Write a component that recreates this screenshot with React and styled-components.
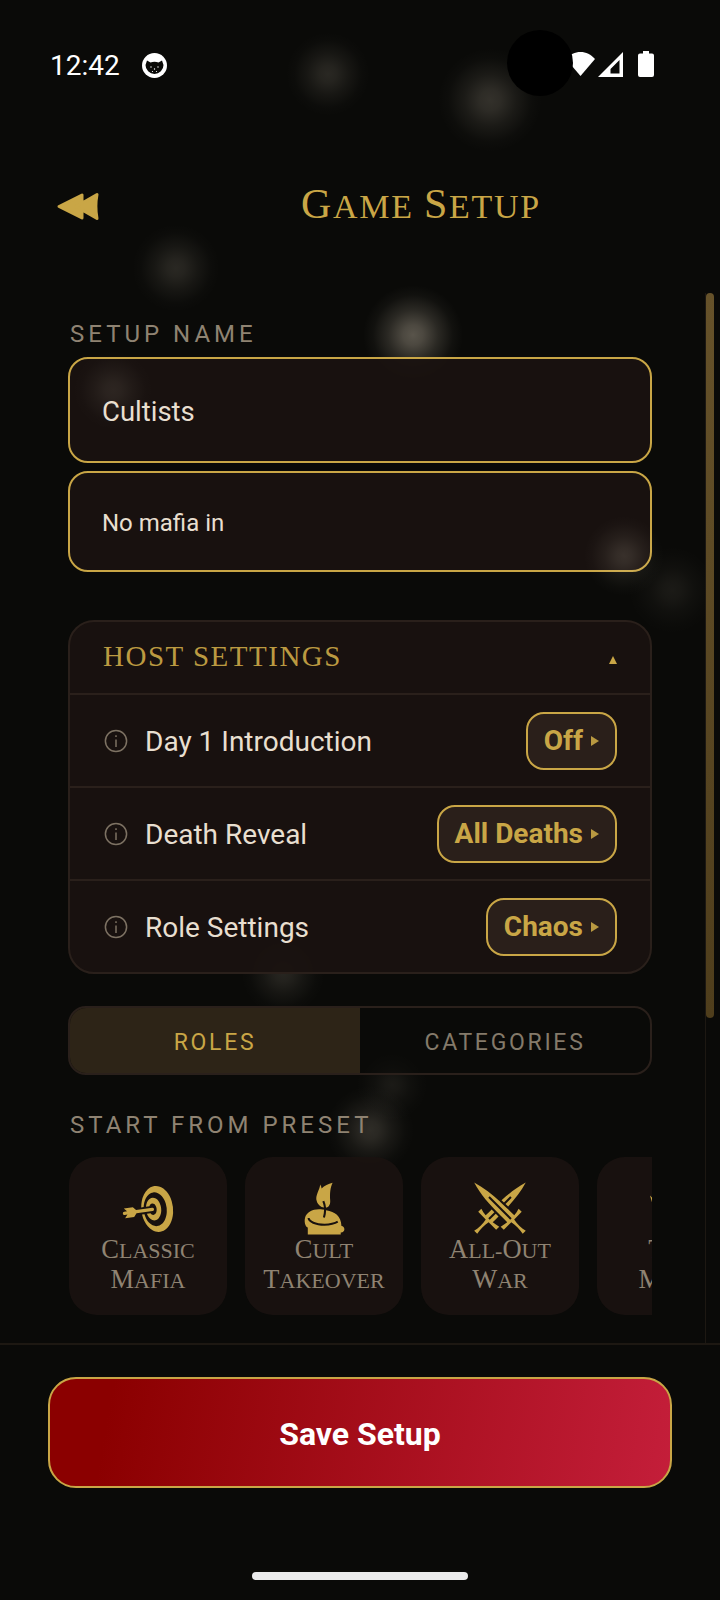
import styled, { createGlobalStyle } from "styled-components";
import { GiBullseye, GiCandleFlame, GiCrossedSwords, GiCrown } from "react-icons/gi";

const gold = "#c9a646";
const line = "#2a201b";
const panel = "rgba(26, 18, 16, 0.94)";
const display = `"Liberation Serif", serif`;
const ui = `Roboto, "Liberation Sans", sans-serif`;

const GlobalStyle = createGlobalStyle`
  html, body {
    margin: 0;
    background: #0a0a08;
  }
  * {
    box-sizing: border-box;
  }
`;

const spot = (x, y, r, a) =>
  `radial-gradient(circle ${r}px at ${x}px ${y}px, rgba(255, 240, 215, ${a}), rgba(255, 240, 215, ${a * 0.85}) 20%, rgba(255, 240, 215, ${a * 0.42}) 50%, rgba(255, 240, 215, ${a * 0.1}) 80%, transparent)`;

const Page = styled.div`
  position: relative;
  width: 720px;
  height: 1600px;
  display: flex;
  flex-direction: column;
  overflow: hidden;
  font-family: ${ui};
  background-color: #0a0a08;
  background-image: ${[
    spot(328, 74, 42, 0.13),
    spot(490, 100, 52, 0.17),
    spot(176, 268, 44, 0.13),
    spot(413, 335, 50, 0.32),
    spot(672, 590, 44, 0.07),
    spot(283, 973, 42, 0.12),
    spot(392, 1085, 36, 0.07),
    spot(370, 1130, 44, 0.15),
  ].join(", ")};
`;

const FrontSpecks = styled.div`
  position: absolute;
  inset: 0;
  pointer-events: none;
  background-image: ${[spot(113, 390, 40, 0.09), spot(624, 556, 40, 0.14)].join(", ")};
`;

const StatusBar = styled.div`
  height: 165px;
  display: flex;
  align-items: flex-start;
  padding: 48px 66px 0 50px;
  color: #fff;
`;

const Clock = styled.span`
  font-size: 28px;
  line-height: 36px;
  width: 92px;
`;

const CatBadge = styled.svg`
  margin-top: 5px;
  width: 25px;
  height: 25px;
`;

const StatusIcons = styled.div`
  margin-left: auto;
  display: flex;
  align-items: flex-start;
  gap: 3px;
  padding-top: 3px;
`;

const BatteryIcon = styled.svg`
  margin-left: 11px;
`;

const Camera = styled.div`
  position: absolute;
  left: 507px;
  top: 30px;
  width: 66px;
  height: 66px;
  border-radius: 50%;
  background: #000;
`;

const Header = styled.header`
  height: 80px;
  display: flex;
  align-items: flex-start;
  gap: 201px;
  padding: 25px 0 0 56px;
`;

const BackIcon = styled.svg`
  width: 44px;
  height: 30px;
  flex: none;
  margin-top: 2px;
`;

const Title = styled.h1`
  margin: -10px 0 0;
  font: 400 34px/48px ${display};
  text-transform: uppercase;
  color: ${gold};
  letter-spacing: 1.7px;
`;

const Cap = styled.span`
  font-size: ${(p) => p.$size}px;
`;

const Scroll = styled.main`
  position: relative;
  flex: 1;
  min-height: 0;
  padding: 76px 68px 0;
  display: flex;
  flex-direction: column;
`;

const Rail = styled.div`
  position: absolute;
  top: 48px;
  bottom: 0;
  left: 705px;
  width: 10px;
  border-left: 1px solid #1d1812;
`;

const Thumb = styled.div`
  width: 8px;
  height: 725px;
  border-radius: 4px;
  background: linear-gradient(#66522a, #4f3e1c);
`;

const FieldLabel = styled.div`
  padding: 1px 0 0 2px;
  font-size: 24px;
  line-height: 24px;
  letter-spacing: 4px;
  color: #8f8372;
`;

const Input = styled.div`
  height: ${(p) => p.$h}px;
  margin-top: ${(p) => p.$mt}px;
  display: flex;
  align-items: center;
  padding: ${(p) => p.$pt}px 0 0 32px;
  border: 2px solid ${gold};
  border-radius: 20px;
  background: ${panel};
  color: #e8dfd0;
  font-size: ${(p) => p.$size}px;
`;

const Settings = styled.section`
  margin-top: 48px;
  border: 2px solid ${line};
  border-radius: 26px;
  background: ${panel};
`;

const SettingsHead = styled.div`
  height: 73px;
  display: flex;
  align-items: center;
  justify-content: space-between;
  padding: 0 33px 4px 33px;
  border-bottom: 2px solid ${line};
`;

const SettingsTitle = styled.span`
  font: 400 29px/34px ${display};
  letter-spacing: 1.5px;
  color: ${gold};
  opacity: 0.92;
`;

const Caret = styled.span`
  width: 0;
  height: 0;
  margin-top: 8px;
  border-left: 4px solid transparent;
  border-right: 4px solid transparent;
  border-bottom: 8px solid ${gold};
`;

const Row = styled.div`
  height: ${(p) => (p.$last ? 91 : 93)}px;
  display: flex;
  align-items: center;
  padding: 0 33px 0 34px;
  border-bottom: ${(p) => (p.$last ? "none" : `2px solid ${line}`)};
`;

const InfoIcon = styled.svg`
  width: 24px;
  height: 24px;
  flex: none;
  margin-right: 17px;
`;

const RowLabel = styled.span`
  flex: 1;
  padding-top: 2px;
  font-size: 28px;
  color: #e8dfd0;
`;

const Pill = styled.div`
  height: 58px;
  display: flex;
  align-items: center;
  gap: 8px;
  padding: 0 16px;
  border: 2px solid ${gold};
  border-radius: 18px;
  background: #2a1f1a;
  color: ${gold};
  font-size: 28px;
  font-weight: 700;
`;

const PillArrow = styled.span`
  width: 0;
  height: 0;
  border-top: 5px solid transparent;
  border-bottom: 5px solid transparent;
  border-left: 8px solid ${gold};
  opacity: 0.9;
`;

const Tabs = styled.div`
  margin-top: 32px;
  height: 69px;
  display: flex;
  border: 2px solid ${line};
  border-radius: 18px;
  overflow: hidden;
  background: rgba(10, 10, 8, 0.5);
`;

const Tab = styled.div`
  flex: 1;
  display: flex;
  align-items: center;
  justify-content: center;
  padding-top: 3px;
  font-size: 23px;
  letter-spacing: 2.7px;
  color: ${(p) => (p.$active ? gold : "#847a6a")};
  background: ${(p) => (p.$active ? "#2d2417" : "transparent")};
`;

const PresetLabel = styled(FieldLabel)`
  margin-top: 37px;
`;

const Presets = styled.div`
  margin: 20px 0 0 1px;
  display: flex;
  gap: 18px;
  overflow: hidden;
`;

const Preset = styled.div`
  flex: 0 0 158px;
  height: 158px;
  display: flex;
  flex-direction: column;
  align-items: center;
  padding-top: 24px;
  border-radius: 28px;
  background: ${panel};
  color: ${gold};
`;

const PresetName = styled.div`
  margin-top: -2px;
  width: 158px;
  text-align: center;
  font: 400 22px/28px ${display};
  text-transform: uppercase;
  color: #8f8372;
`;

const Footer = styled.footer`
  height: 257px;
  flex: none;
  position: relative;
  display: flex;
  flex-direction: column;
  padding: 32px 48px 0;
  border-top: 2px solid #1d1812;
  background: #0a0a08;
`;

const SaveButton = styled.button`
  height: 111px;
  padding-top: 3px;
  border: 2px solid ${gold};
  border-radius: 28px;
  background: linear-gradient(100deg, #8b0000 10%, #c41e3a 100%);
  color: #fff;
  font: 700 32px ${ui};
`;

const HomeBar = styled.div`
  width: 216px;
  height: 8px;
  margin: 84px auto 0;
  border-radius: 4px;
  background: #ebebeb;
`;

const settings = [
  ["Day 1 Introduction", "Off"],
  ["Death Reveal", "All Deaths"],
  ["Role Settings", "Chaos"],
];

const presets = [
  [GiBullseye, "Classic", "Mafia"],
  [GiCandleFlame, "Cult", "Takeover"],
  [GiCrossedSwords, "All-Out", "War"],
  [GiCrown, "Tiny", "Mafia"],
];

// cinzel-style caps: bigger first letter of each part, the rest uppercased by the parent
const CapWord = ({ word, size }) =>
  word.split("-").map((part, i) => (
    <span key={part}>
      {i > 0 && "-"}
      <Cap $size={size}>{part[0]}</Cap>
      {part.slice(1)}
    </span>
  ));

const Info = () => (
  <InfoIcon viewBox="0 0 24 24" fill="none" stroke="#7d7263" strokeWidth="1.5">
    <circle cx="12" cy="12" r="10.6" />
    <path d="M12 10.5V18" />
    <path d="M12 6.2v1.8" />
  </InfoIcon>
);

export default function App() {
  return (
    <Page>
      <GlobalStyle />
      <StatusBar>
        <Clock>12:42</Clock>
        <CatBadge viewBox="0 0 25 25">
          <circle cx="12.5" cy="12.5" r="12.5" fill="#fff" />
          <path d="M3.5 12 5 7.500l3.500 2a10 10 0 0 1 8 0l3.500-2 1.500 4.500a9 9 0 0 1-18 0z" fill="#0a0a08" />
          <g fill="#fff">
            <circle cx="9" cy="14" r="0.7" />
            <circle cx="12.500" cy="16" r="0.7" />
            <circle cx="16" cy="14" r="0.7" />
            <circle cx="10.500" cy="18.500" r="0.6" />
            <circle cx="14.500" cy="18.500" r="0.6" />
          </g>
        </CatBadge>
        <StatusIcons>
          <svg width="29" height="26" viewBox="0 0 29 26">
            <path d="M14.500 25 0 8C4 3.500 9 1 14.500 1S25 3.500 29 8z" fill="#fff" />
          </svg>
          <svg width="26" height="26" viewBox="0 0 26 26">
            <path fillRule="evenodd" d="M25 1v25H0zM21.500 9 12.500 18v4.500h9z" fill="#fff" />
          </svg>
          <BatteryIcon width="16" height="26" viewBox="0 0 16 26">
            <path d="M5 0h6v2.500h3a2 2 0 0 1 2 2V24a2 2 0 0 1-2 2H2a2 2 0 0 1-2-2V4.500a2 2 0 0 1 2-2h3z" fill="#fff" />
          </BatteryIcon>
        </StatusIcons>
      </StatusBar>
      <Camera />
      <Header>
        <BackIcon viewBox="0 0 44 30">
          <path
            d="M3 14.500 26 3v23zM20 14.500 41 2.500c-1.500 8-1.500 16 0 24z"
            fill={gold}
            stroke={gold}
            strokeWidth="3"
            strokeLinejoin="round"
          />
        </BackIcon>
        <Title>
          <CapWord word="Game" size={42} /> <CapWord word="Setup" size={42} />
        </Title>
      </Header>
      <Scroll>
        <Rail>
          <Thumb />
        </Rail>
        <FieldLabel>SETUP NAME</FieldLabel>
        <Input $h={106} $mt={11} $size={27.5} $pt={3}>Cultists</Input>
        <Input $h={101} $mt={8} $size={24} $pt={2}>No mafia in</Input>
        <Settings>
          <SettingsHead>
            <SettingsTitle>HOST SETTINGS</SettingsTitle>
            <Caret />
          </SettingsHead>
          {settings.map(([label, value], i) => (
            <Row key={label} $last={i === settings.length - 1}>
              <Info />
              <RowLabel>{label}</RowLabel>
              <Pill>
                {value}
                <PillArrow />
              </Pill>
            </Row>
          ))}
        </Settings>
        <Tabs>
          <Tab $active>ROLES</Tab>
          <Tab>CATEGORIES</Tab>
        </Tabs>
        <PresetLabel>START FROM PRESET</PresetLabel>
        <Presets>
          {presets.map(([Icon, first, second]) => (
            <Preset key={first}>
              <Icon size={56} />
              <PresetName>
                <CapWord word={first} size={26.5} />
                <br />
                <CapWord word={second} size={26.5} />
              </PresetName>
            </Preset>
          ))}
        </Presets>
      </Scroll>
      <FrontSpecks />
      <Footer>
        <SaveButton>Save Setup</SaveButton>
        <HomeBar />
      </Footer>
    </Page>
  );
}
